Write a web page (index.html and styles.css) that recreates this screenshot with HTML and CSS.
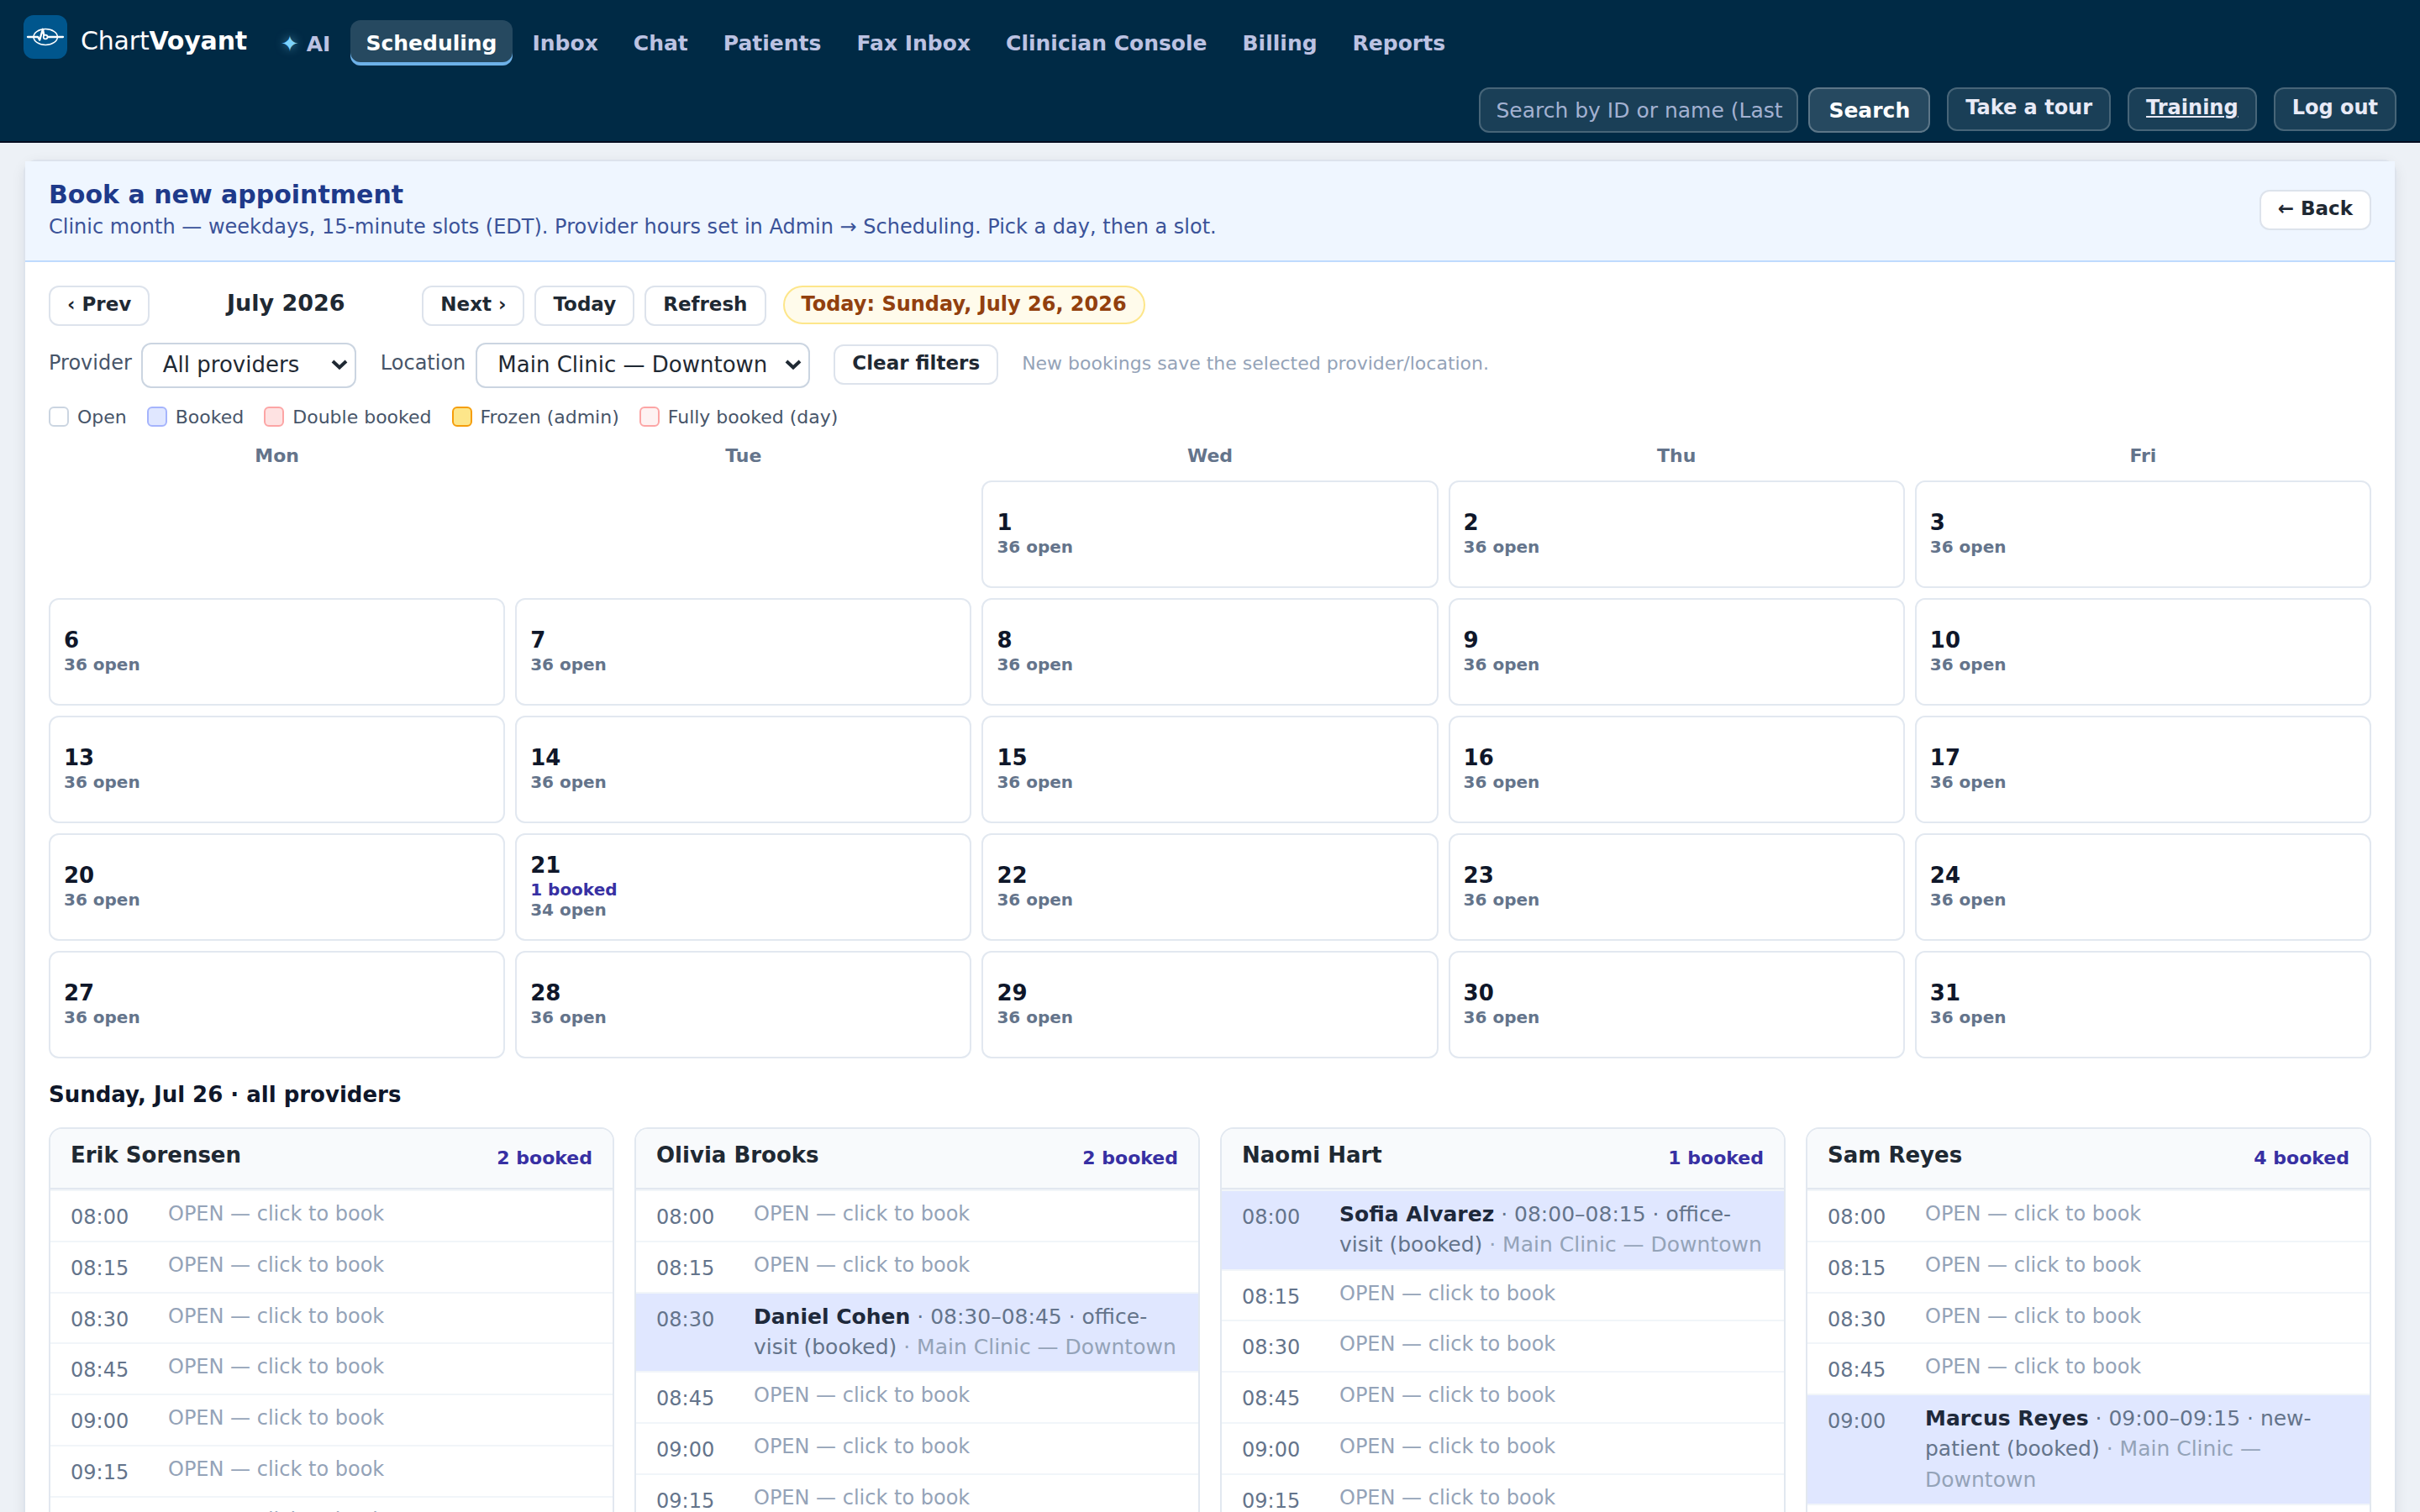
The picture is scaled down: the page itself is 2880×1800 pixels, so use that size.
FILE: index.html
```
<!DOCTYPE html>
<html lang="en">

<head>
  <meta charset="UTF-8">
  <meta name="viewport" content="width=device-width, initial-scale=1.0">
  <title>ChartVoyant - Scheduling</title>
  <link rel="stylesheet" href="styles.css">
</head>

<body>
  <header class="topbar">
    <a class="brand">
      <svg class="logo" viewBox="0 0 52 52">
        <rect width="52" height="52" rx="12" fill="#00568d" />
        <g fill="none" stroke="#fff" stroke-linejoin="round" stroke-linecap="round">
          <ellipse cx="26.2" cy="26" rx="14.2" ry="9.4" stroke-width="1.5" />
          <path d="M5 26H17.2L19.2 29.6L22.9 16.8L24.4 24M28.6 26H47" stroke-width="2.3" />
          <circle cx="26.1" cy="26" r="2.4" fill="#00568d" stroke-width="1.7" />
        </g>
      </svg>
      <span class="brand-name">Chart<b>Voyant</b></span>
    </a>
    <nav class="nav">
      <a class="ai"><span class="star">✦</span>AI</a>
      <a class="active">Scheduling</a>
      <a>Inbox</a>
      <a>Chat</a>
      <a>Patients</a>
      <a>Fax Inbox</a>
      <a>Clinician Console</a>
      <a>Billing</a>
      <a>Reports</a>
    </nav>
    <div class="tools">
      <form class="search">
        <input type="text" placeholder="Search by ID or name (Last">
        <button type="button">Search</button>
      </form>
      <a class="tool">Take a tour</a>
      <a class="tool underline">Training</a>
      <a class="tool">Log out</a>
    </div>
  </header>

  <main class="panel">
    <div class="banner">
      <div>
        <h1>Book a new appointment</h1>
        <p>Clinic month — weekdays, 15-minute slots (EDT). Provider hours set in Admin → Scheduling. Pick a day, then a slot.</p>
      </div>
      <a class="btn">← Back</a>
    </div>

    <div class="content">
      <div class="toolbar">
        <a class="btn">‹ Prev</a>
        <span class="month">July 2026</span>
        <a class="btn">Next ›</a>
        <a class="btn">Today</a>
        <a class="btn">Refresh</a>
        <span class="today">Today: Sunday, July 26, 2026</span>
      </div>

      <div class="filters">
        <label>Provider</label>
        <div class="select provider">All providers
          <svg viewBox="0 0 20 12"><path d="M2 2L10 9.5L18 2" /></svg>
        </div>
        <label>Location</label>
        <div class="select location">Main Clinic — Downtown
          <svg viewBox="0 0 20 12"><path d="M2 2L10 9.5L18 2" /></svg>
        </div>
        <a class="btn">Clear filters</a>
        <span class="hint">New bookings save the selected provider/location.</span>
      </div>

      <div class="legend">
        <span><i></i>Open</span>
        <span><i class="booked"></i>Booked</span>
        <span><i class="double"></i>Double booked</span>
        <span><i class="frozen"></i>Frozen (admin)</span>
        <span><i class="full"></i>Fully booked (day)</span>
      </div>

      <div class="calendar">
        <div class="weekday">Mon</div>
        <div class="weekday">Tue</div>
        <div class="weekday">Wed</div>
        <div class="weekday">Thu</div>
        <div class="weekday">Fri</div>

        <div></div>
        <div></div>
        <div class="day"><b>1</b><span>36 open</span></div>
        <div class="day"><b>2</b><span>36 open</span></div>
        <div class="day"><b>3</b><span>36 open</span></div>

        <div class="day"><b>6</b><span>36 open</span></div>
        <div class="day"><b>7</b><span>36 open</span></div>
        <div class="day"><b>8</b><span>36 open</span></div>
        <div class="day"><b>9</b><span>36 open</span></div>
        <div class="day"><b>10</b><span>36 open</span></div>

        <div class="day"><b>13</b><span>36 open</span></div>
        <div class="day"><b>14</b><span>36 open</span></div>
        <div class="day"><b>15</b><span>36 open</span></div>
        <div class="day"><b>16</b><span>36 open</span></div>
        <div class="day"><b>17</b><span>36 open</span></div>

        <div class="day"><b>20</b><span>36 open</span></div>
        <div class="day"><b>21</b><span class="count">1 booked</span><span>34 open</span></div>
        <div class="day"><b>22</b><span>36 open</span></div>
        <div class="day"><b>23</b><span>36 open</span></div>
        <div class="day"><b>24</b><span>36 open</span></div>

        <div class="day"><b>27</b><span>36 open</span></div>
        <div class="day"><b>28</b><span>36 open</span></div>
        <div class="day"><b>29</b><span>36 open</span></div>
        <div class="day"><b>30</b><span>36 open</span></div>
        <div class="day"><b>31</b><span>36 open</span></div>
      </div>

      <h2>Sunday, Jul 26 · all providers</h2>

      <div class="providers">
        <section class="card">
          <div class="card-head"><h3>Erik Sorensen</h3><span class="count">2 booked</span></div>
          <div class="slot"><time>08:00</time><span>OPEN — click to book</span></div>
          <div class="slot"><time>08:15</time><span>OPEN — click to book</span></div>
          <div class="slot"><time>08:30</time><span>OPEN — click to book</span></div>
          <div class="slot"><time>08:45</time><span>OPEN — click to book</span></div>
          <div class="slot"><time>09:00</time><span>OPEN — click to book</span></div>
          <div class="slot"><time>09:15</time><span>OPEN — click to book</span></div>
          <div class="slot"><time>09:30</time><span>OPEN — click to book</span></div>
        </section>

        <section class="card">
          <div class="card-head"><h3>Olivia Brooks</h3><span class="count">2 booked</span></div>
          <div class="slot"><time>08:00</time><span>OPEN — click to book</span></div>
          <div class="slot"><time>08:15</time><span>OPEN — click to book</span></div>
          <div class="slot taken"><time>08:30</time><p><b>Daniel Cohen</b> · 08:30–08:45 · office-visit (booked) <em>· Main Clinic — Downtown</em></p></div>
          <div class="slot"><time>08:45</time><span>OPEN — click to book</span></div>
          <div class="slot"><time>09:00</time><span>OPEN — click to book</span></div>
          <div class="slot"><time>09:15</time><span>OPEN — click to book</span></div>
        </section>

        <section class="card">
          <div class="card-head"><h3>Naomi Hart</h3><span class="count">1 booked</span></div>
          <div class="slot taken"><time>08:00</time><p><b>Sofia Alvarez</b> · 08:00–08:15 · office-visit (booked) <em>· Main Clinic — Downtown</em></p></div>
          <div class="slot"><time>08:15</time><span>OPEN — click to book</span></div>
          <div class="slot"><time>08:30</time><span>OPEN — click to book</span></div>
          <div class="slot"><time>08:45</time><span>OPEN — click to book</span></div>
          <div class="slot"><time>09:00</time><span>OPEN — click to book</span></div>
          <div class="slot"><time>09:15</time><span>OPEN — click to book</span></div>
        </section>

        <section class="card">
          <div class="card-head"><h3>Sam Reyes</h3><span class="count">4 booked</span></div>
          <div class="slot"><time>08:00</time><span>OPEN — click to book</span></div>
          <div class="slot"><time>08:15</time><span>OPEN — click to book</span></div>
          <div class="slot"><time>08:30</time><span>OPEN — click to book</span></div>
          <div class="slot"><time>08:45</time><span>OPEN — click to book</span></div>
          <div class="slot taken"><time>09:00</time><p><b>Marcus Reyes</b> · 09:00–09:15 · new-patient (booked) <em>· Main Clinic — Downtown</em></p></div>
          <div class="slot"></div>
        </section>
      </div>
    </div>
  </main>
</body>

</html>
```

FILE: styles.css
```
* {
  box-sizing: border-box;
}

body {
  margin: 0;
  height: 1800px;
  overflow: hidden;
  background: #edf1f6;
  color: #1f2933;
  font-family: "DejaVu Sans", sans-serif;
  font-size: 24px;
}

h1,
h2,
h3,
p {
  margin: 0;
}

/* top bar */
.topbar {
  display: flex;
  flex-wrap: wrap;
  align-items: flex-start;
  align-content: flex-start;
  gap: 26px 24px;
  height: 170px;
  padding: 18px 28px 0;
  background: #002a45;
  border-bottom: 2px solid #020c1f;
}

.brand {
  display: flex;
  align-items: center;
  gap: 16px;
  height: 52px;
}

.logo {
  width: 52px;
  height: 52px;
}

.brand-name {
  margin-top: 8px;
  font-size: 30px;
  letter-spacing: -0.2px;
  color: #fff;
}

.nav {
  display: flex;
  gap: 6px;
  margin-top: 6px;
}

.nav a {
  height: 54px;
  padding: 0 18px;
  border-radius: 12px;
  line-height: 56px;
  font-size: 25px;
  font-weight: bold;
  color: #bcc2e2;
}

.nav .active {
  background: rgba(255, 255, 255, 0.15);
  box-shadow: inset 0 -4px 0 #6db1e8;
  color: #fff;
}

.star {
  margin: 0 9px 0 -2px;
  font-size: 26px;
  font-weight: normal;
  color: #7dd3fc;
  text-shadow: 0 0 12px rgba(125, 211, 252, 0.6);
}

.tools {
  display: flex;
  justify-content: flex-end;
  align-items: flex-start;
  gap: 20px;
  width: 100%;
}

.search {
  display: flex;
  gap: 12px;
}

.search input {
  width: 380px;
  height: 54px;
  padding: 0 16px 0 18px;
  border: 2px solid rgba(255, 255, 255, 0.2);
  border-radius: 12px;
  background: rgba(255, 255, 255, 0.1);
  font: 25px "DejaVu Sans", sans-serif;
}

.search input::placeholder {
  color: #a3b1d1;
}

.search button {
  height: 54px;
  padding: 0 22px;
  border: 2px solid rgba(255, 255, 255, 0.25);
  border-radius: 12px;
  background: rgba(255, 255, 255, 0.15);
  font: bold 25px "DejaVu Sans", sans-serif;
  color: #fff;
}

.tool {
  height: 52px;
  padding: 8px 20px 0;
  border: 2px solid rgba(255, 255, 255, 0.2);
  border-radius: 12px;
  background: rgba(255, 255, 255, 0.1);
  line-height: 28px;
  font-weight: bold;
  color: #e8eaf6;
}

.underline {
  text-decoration: underline;
}

/* main panel */
.panel {
  margin: 20px 28px 0;
  border: 2px solid #dde3ec;
  border-radius: 16px;
  background: #fff;
  box-shadow: 0 4px 16px rgba(15, 23, 42, 0.08);
}

.banner {
  display: flex;
  justify-content: space-between;
  align-items: center;
  height: 120px;
  padding: 22px 28px 24px;
  border-bottom: 2px solid #bfdbfe;
  background: #eff6ff;
}

.banner h1 {
  font-size: 30px;
  line-height: 36px;
  color: #1e3a8a;
}

.banner p {
  margin-top: 4px;
  line-height: 32px;
  color: #3b5399;
}

.btn {
  height: 48px;
  padding: 6px 20px 0;
  border: 2px solid #dde3ec;
  border-radius: 12px;
  background: #fff;
  font-size: 23px;
  font-weight: bold;
  line-height: 28px;
}

.content {
  padding: 28px;
}

.toolbar {
  display: flex;
  align-items: flex-start;
  gap: 12px;
}

.month {
  width: 300px;
  text-align: center;
  font-size: 27px;
  font-weight: bold;
  line-height: 41px;
}

.today {
  height: 46px;
  margin-left: 8px;
  padding: 6px 20px 0;
  border: 2px solid #fde68a;
  border-radius: 23px;
  background: #fffbeb;
  font-weight: bold;
  line-height: 28px;
  color: #92400e;
}

.filters {
  display: flex;
  align-items: center;
  margin-top: 20px;
}

.filters label {
  margin-right: 12px;
  padding-bottom: 6px;
  color: #475569;
}

.select {
  display: flex;
  justify-content: space-between;
  align-items: center;
  height: 54px;
  margin-right: 28px;
  padding: 0 8px 3px 24px;
  border: 2px solid #cbd5e1;
  border-radius: 12px;
  font-size: 26px;
}

.provider {
  width: 256px;
  margin-left: -1px;
  margin-right: 29px;
}

.location {
  width: 398px;
}

.select svg {
  width: 20px;
  height: 12px;
  fill: none;
  stroke: #1f2933;
  stroke-width: 4;
}

.filters .btn {
  margin: 0 28px 2px 0;
}

.hint {
  padding-bottom: 5px;
  font-size: 22px;
  color: #94a3b8;
}

.legend {
  display: flex;
  gap: 24px;
  margin-top: 22px;
  font-size: 22px;
  line-height: 25px;
  color: #475569;
}

.legend span {
  display: flex;
  gap: 10px;
  height: 24px;
}

.legend i {
  width: 24px;
  height: 24px;
  border: 2px solid #cbd5e1;
  border-radius: 6px;
}

.legend .booked {
  border-color: #a5b4fc;
  background: #e0e7ff;
}

.legend .double {
  border-color: #fca5a5;
  background: #fee2e2;
}

.legend .frozen {
  border-color: #f59e0b;
  background: #fde68a;
}

.legend .full {
  border-color: #fca5a5;
  background: #fef2f2;
}

/* month grid */
.calendar {
  display: grid;
  grid-template-columns: repeat(5, 1fr);
  gap: 12px;
  margin-top: 22px;
}

.weekday {
  height: 30px;
  text-align: center;
  font-size: 22px;
  font-weight: bold;
  line-height: 26px;
  color: #64748b;
}

.day {
  display: flex;
  flex-direction: column;
  justify-content: center;
  height: 128px;
  padding: 0 16px;
  border: 2px solid #e2e8f0;
  border-radius: 12px;
  font-size: 20px;
  font-weight: bold;
  line-height: 24px;
  color: #64748b;
}

.day b {
  margin-bottom: 4px;
  font-size: 26px;
  line-height: 26px;
  color: #0f172a;
}

.count,
.day .count {
  color: #3730a3;
}

h2 {
  margin: 28px 0 24px;
  font-size: 26px;
  line-height: 30px;
  color: #0f172a;
}

/* provider columns */
.providers {
  display: grid;
  grid-template-columns: repeat(4, 1fr);
  align-items: start;
  gap: 24px;
}

.card {
  border: 2px solid #e2e8f0;
  border-radius: 16px;
  overflow: hidden;
}

.card-head {
  display: flex;
  justify-content: space-between;
  align-items: flex-start;
  height: 72px;
  padding: 16px 24px 0;
  border-bottom: 2px solid #e2e8f0;
  background: #f8fafc;
}

.card-head h3 {
  font-size: 26px;
  line-height: 30px;
}

.card-head .count {
  margin-top: 6px;
  font-size: 22px;
  font-weight: bold;
  line-height: 26px;
}

.slot {
  display: grid;
  grid-template-columns: 96px 1fr;
  align-items: start;
  column-gap: 20px;
  min-height: 60.8px;
  padding: 10px 24px;
  border-top: 2px solid #f1f5f9;
  line-height: 32px;
  color: #94a3b8;
}

.slot time {
  margin-top: 5px;
  color: #64748b;
}

.slot span {
  margin-top: 1px;
}

.taken {
  background: #e0e7ff;
  background-clip: padding-box;
}

.taken p {
  font-size: 25px;
  line-height: 36.25px;
  color: #64748b;
}

.taken b {
  color: #1e293b;
}

.taken em {
  font-style: normal;
  color: #94a3b8;
}
```
